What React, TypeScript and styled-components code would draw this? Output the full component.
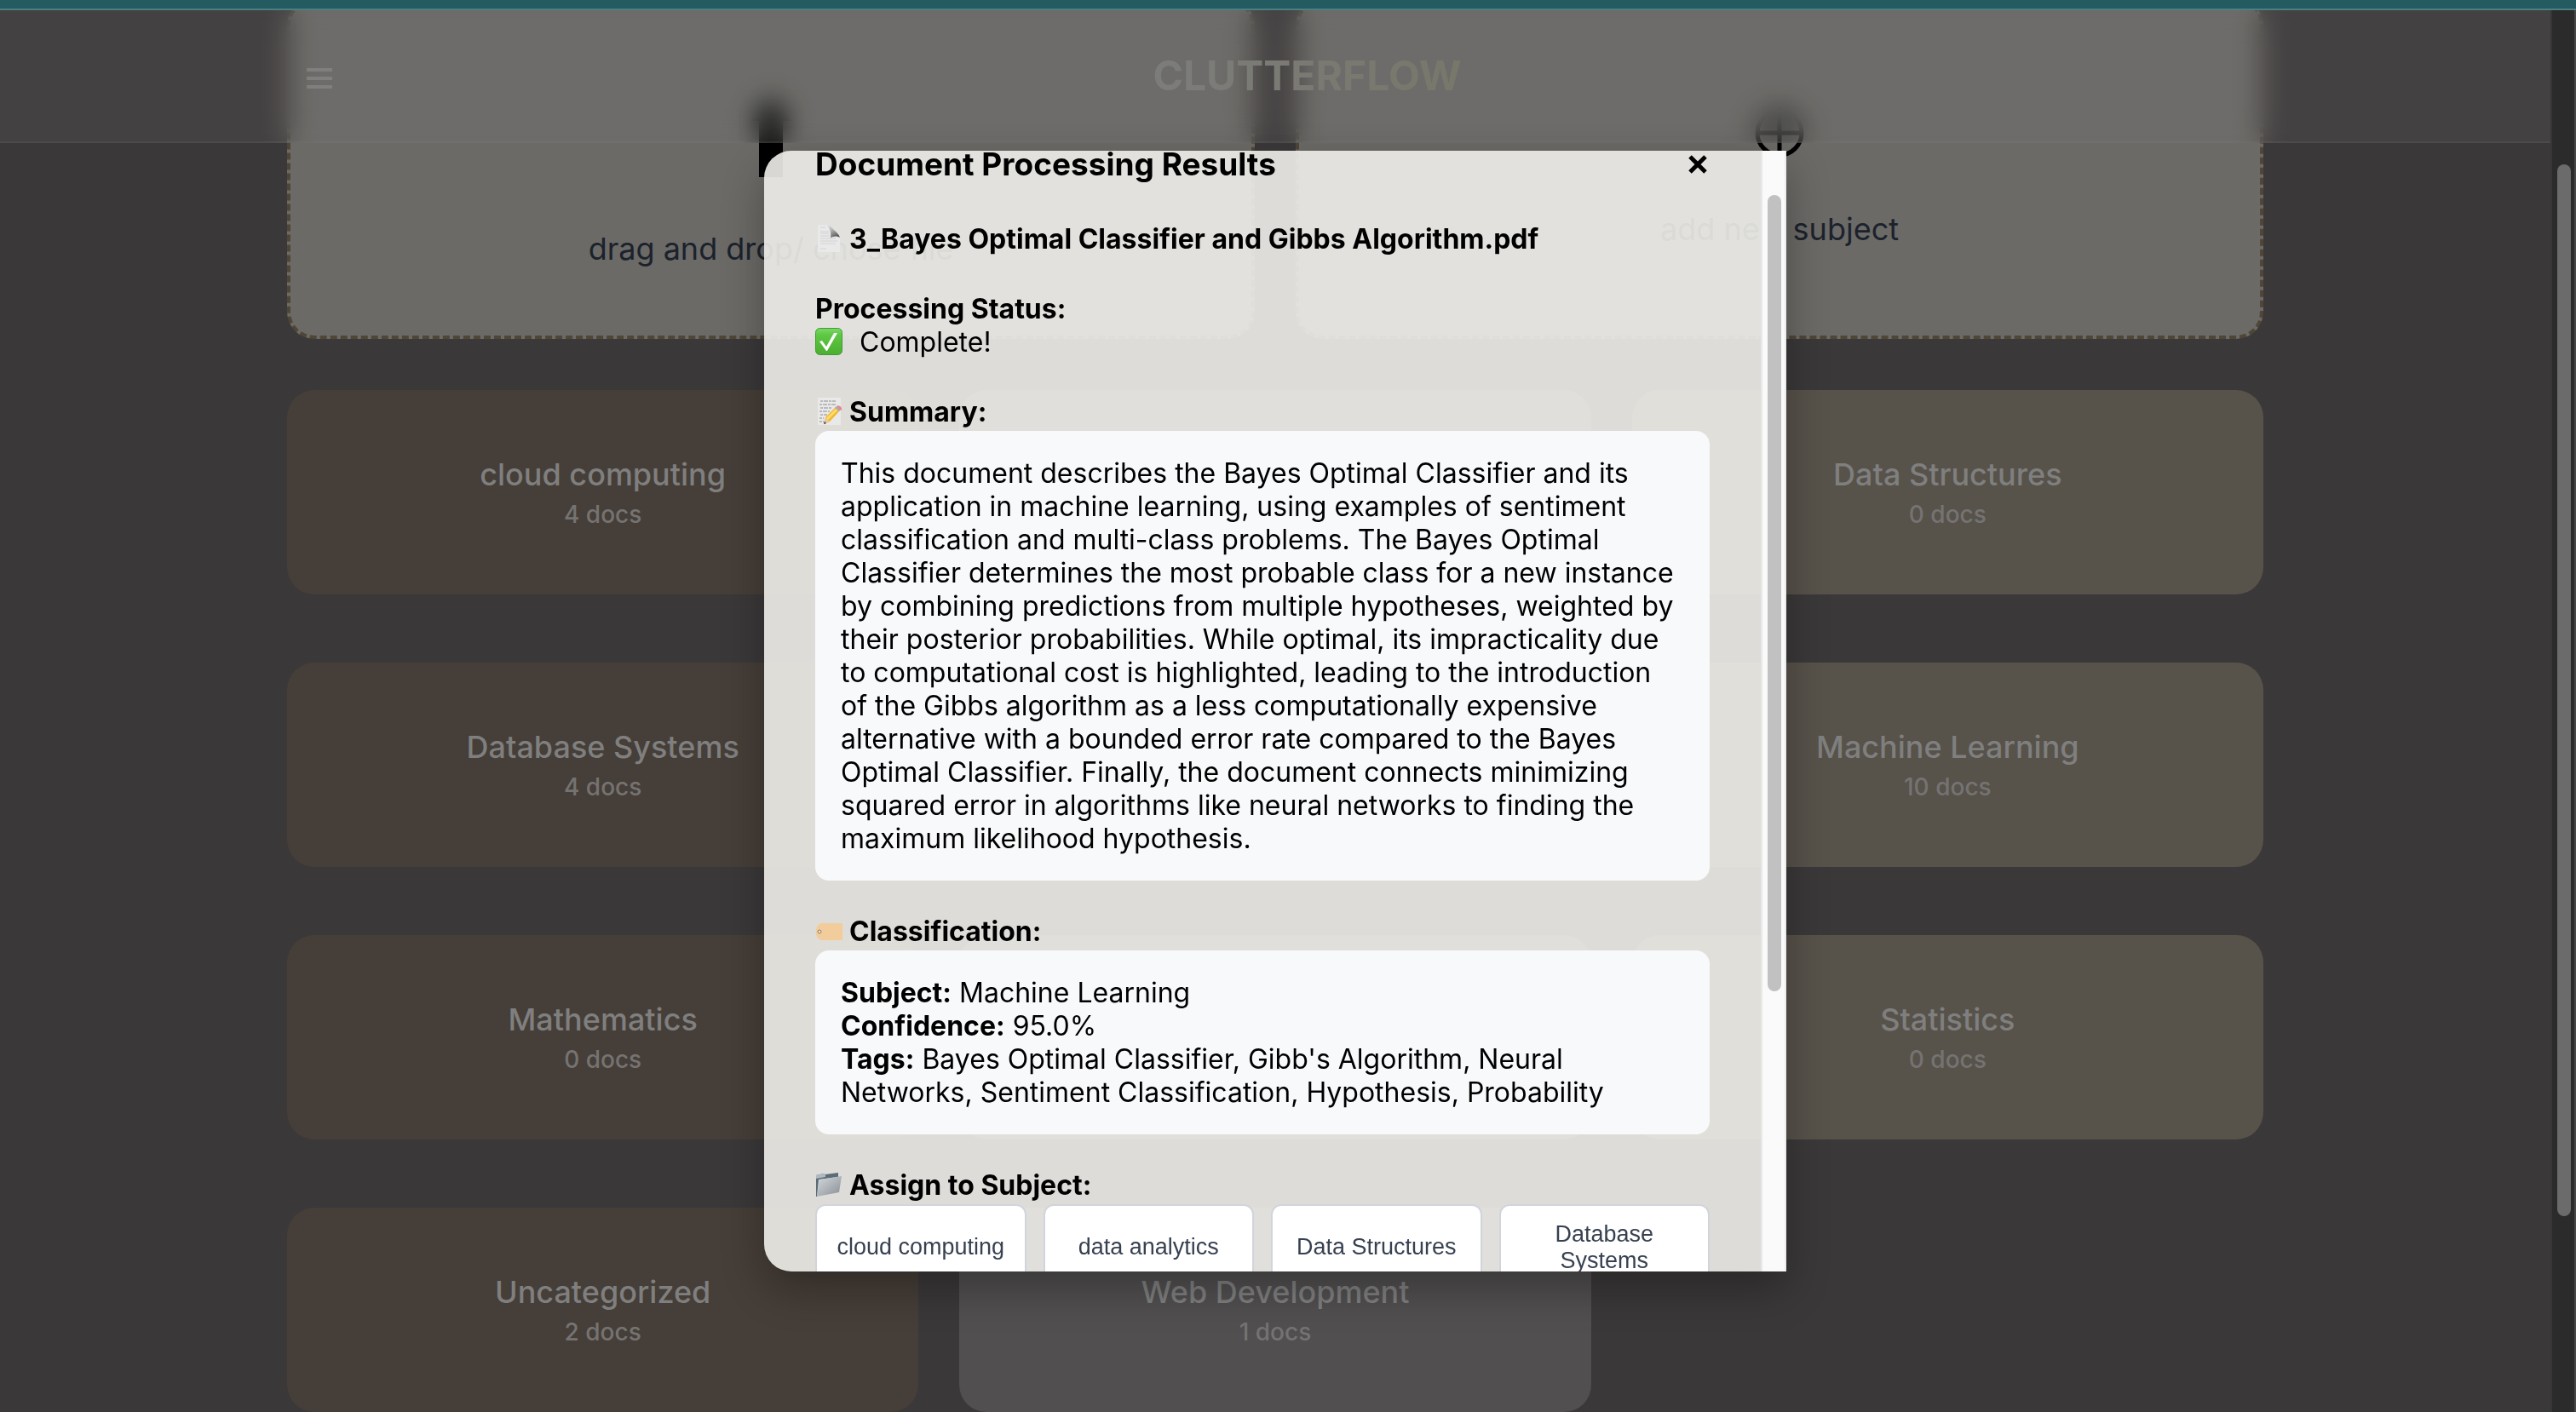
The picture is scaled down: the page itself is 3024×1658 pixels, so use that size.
import React from "react";
import styled, { createGlobalStyle } from "styled-components";

const GlobalStyle = createGlobalStyle`
  *, *::before, *::after { box-sizing: border-box; }
  html, body, #root { height: 100%; }
  body {
    margin: 0;
    background: #3b3839;
    font-family: Inter, "Liberation Sans", sans-serif;
    overflow: hidden;
  }
  button { font: inherit; color: inherit; border: 0; background: none; padding: 0; cursor: pointer; }
  h1, h2, h3, p { margin: 0; }
`;

const Shell = styled.div`
  height: 100vh;
  display: flex;
  flex-direction: column;
`;

const BrowserStrip = styled.div`
  flex: none;
  height: 12px;
  background: #245b60;
  border-bottom: 2px solid #4a7f84;
`;

const Window = styled.div`
  flex: 1;
  min-height: 0;
  display: flex;
`;

const Viewport = styled.div`
  flex: 1;
  min-width: 0;
  position: relative;
  overflow: hidden;
  background: #3b3839;
`;

const Nav = styled.header`
  position: absolute;
  top: 0;
  left: 0;
  right: 0;
  height: 156px;
  background: rgba(127, 127, 127, 0.146);
  border-bottom: 2px solid rgba(127, 127, 127, 0.15);
  backdrop-filter: blur(16px);
`;

const NavInner = styled.div`
  max-width: 2320px;
  height: 100%;
  margin: 0 auto;
  display: flex;
  align-items: center;
`;

const MenuButton = styled.button`
  width: 75px;
  height: 64px;
  display: grid;
  place-items: center;
`;

const Logo = styled.h1`
  flex: 1;
  text-align: center;
  font-size: 48px;
  line-height: 58px;
  font-weight: 700;
  color: transparent;

  span {
    background: linear-gradient(90deg, #7c7d7b, #78776a);
    background-clip: text;
    -webkit-background-clip: text;
  }
`;

const Content = styled.main`
  max-width: 2320px;
  margin: -14px auto 0;
  display: flex;
  flex-direction: column;
  gap: 60px;
`;

const DropRow = styled.div`
  display: grid;
  grid-template-columns: 1fr 1fr;
  gap: 48px;
`;

const DropCard = styled.button`
  height: 400px;
  display: flex;
  flex-direction: column;
  align-items: center;
  justify-content: center;
  background: #6b6a67;
  border: 4px dashed #504636;
  border-radius: 32px;
  color: #1c222c;
  font-size: 36px;
  line-height: 44px;
`;

const DropIcon = styled.span<{ $height: number }>`
  height: ${(p) => p.$height}px;
  padding-bottom: 62px;
  display: flex;
  align-items: flex-end;
  color: #000;
`;

const SubjectGrid = styled.div`
  display: grid;
  grid-template-columns: repeat(3, 1fr);
  gap: 80px 48px;
`;

const tones = { brown: "#463e38", grey: "#514f50", olive: "#57524a" };

const SubjectCard = styled.article<{ $tone: keyof typeof tones }>`
  height: 240px;
  display: flex;
  flex-direction: column;
  align-items: center;
  justify-content: center;
  gap: 8px;
  border-radius: 32px;
  background: ${(p) => tones[p.$tone]};
`;

const SubjectName = styled.h2`
  font-size: 36px;
  line-height: 44px;
  font-weight: 500;
  color: #7f7f7f;
`;

const SubjectCount = styled.p`
  font-size: 28px;
  line-height: 34px;
  font-weight: 500;
  color: #757372;
`;

const ScrollTrack = styled.div<{ $dark?: boolean }>`
  flex: none;
  width: 30px;
  padding: 0 4px 0 6px;
  background: ${(p) => (p.$dark ? "#2b2b2b" : "#fafafa")};
  border-left: 2px solid ${(p) => (p.$dark ? "#373737" : "#e8e8e8")};
  border-right: 2px solid ${(p) => (p.$dark ? "#484848" : "#ededed")};
`;

const ScrollThumb = styled.div<{ $dark?: boolean; $top: number; $size: number }>`
  height: 100%;

  &::before {
    content: "";
    display: block;
    height: ${(p) => p.$top}%;
  }
  &::after {
    content: "";
    display: block;
    height: ${(p) => p.$size}%;
    width: 16px;
    border-radius: 8px;
    background: ${(p) => (p.$dark ? "#6b6b6b" : "#c1c1c1")};
  }
`;

const Overlay = styled.div`
  position: absolute;
  inset: 0;
  display: flex;
  align-items: center;
  justify-content: center;
`;

const Modal = styled.section`
  width: 1200px;
  max-width: 90%;
  height: 80%;
  display: flex;
  overflow: hidden;
  border-radius: 32px 0 0 32px;
  background: rgba(239, 238, 234, 0.9);
  box-shadow: 0 20px 50px rgba(0, 0, 0, 0.3);
  color: #000;
  font-size: 32px;
  line-height: 39px;
`;

const ModalBody = styled.div`
  flex: 1;
  min-width: 0;
  overflow: hidden;
  padding: 0 60px;
`;

const ModalHeader = styled.div`
  display: flex;
  align-items: center;
  justify-content: space-between;
  margin: -4px 0 48px;
`;

const ModalTitle = styled.h2`
  font-size: 37px;
  line-height: 40px;
  font-weight: 700;
`;

const CloseButton = styled.button`
  width: 28px;
  height: 40px;
  display: grid;
  place-items: center;
`;

const Section = styled.div`
  margin-bottom: 40px;
`;

const IconLine = styled.div<{ $gap?: number }>`
  height: 42px;
  display: flex;
  align-items: flex-start;
  gap: ${(p) => p.$gap ?? 8}px;

  svg { flex: none; margin-top: 3px; }
`;

const Strong = styled.h3`
  font-size: 32px;
  line-height: 39px;
  font-weight: 700;
`;

const Panel = styled.div`
  padding: 30px;
  border-radius: 16px;
  background: #f8f9fb;

  b { font-weight: 700; }
`;

const ChoiceGrid = styled.div`
  display: grid;
  grid-template-columns: repeat(4, 1fr);
  gap: 20px;
`;

const Choice = styled.button`
  padding: 18px 20px;
  border: 2px solid #d1d5db;
  border-radius: 12px;
  background: #fff;
  color: #374151;
  font-family: "Liberation Sans", Arial, sans-serif;
  font-size: 27px;
  line-height: 31px;
`;

const MenuIcon = () => (
  <svg width="30" height="32" viewBox="0 0 30 32" fill="#7f7f7f" aria-hidden="true">
    <path d="M0 7h30v4H0zM0 17h30v4H0zM0 27h30v4H0z" />
  </svg>
);

const UploadIcon = () => (
  <svg width="48" height="94" viewBox="0 0 48 94" aria-hidden="true">
    <path d="M24 0L48 28H38V94H10V28H0z" />
  </svg>
);

const PlusCircleIcon = () => (
  <svg width="58" height="58" viewBox="0 0 58 58" fill="none" stroke="#000" strokeWidth="5" aria-hidden="true">
    <circle cx="29" cy="29" r="26" />
    <path d="M29 3v52M3 29h52" />
  </svg>
);

const CloseIcon = () => (
  <svg width="22" height="22" viewBox="0 0 22 22" stroke="#000" strokeWidth="5" aria-hidden="true">
    <path d="M2 2l18 18M20 2L2 20" />
  </svg>
);

const PageIcon = () => (
  <svg width="32" height="32" viewBox="0 0 32 32" aria-hidden="true">
    <defs>
      <linearGradient id="curl" x1="0" y1="0" x2="0.6" y2="1">
        <stop offset="0" stopColor="#e8e8e8" />
        <stop offset="0.5" stopColor="#b0b0b0" />
        <stop offset="1" stopColor="#5c5c5c" />
      </linearGradient>
    </defs>
    <path d="M3 0h13l3 14 10 1v17H3z" fill="#e9e9e9" />
    <path d="M6 3h6M6 8h10M6 10h10M6 13h11M6 16h18M6 19h20M6 22h18M6 28h7" stroke="#d2d2d2" strokeWidth="1" />
    <path d="M13 0c4 3 6 9 5 15 4-2 8-2 11 0C28 11 25 9 22 6 19 3 17 0 13 0z" fill="url(#curl)" />
  </svg>
);

const CheckIcon = () => (
  <svg width="32" height="32" viewBox="0 0 32 32" aria-hidden="true">
    <defs>
      <linearGradient id="green" x1="0" y1="0" x2="0" y2="1">
        <stop offset="0" stopColor="#7fd86a" />
        <stop offset="0.25" stopColor="#5dc843" />
        <stop offset="1" stopColor="#4bae30" />
      </linearGradient>
    </defs>
    <rect x="0.5" y="0.5" width="31" height="31" rx="5" fill="url(#green)" stroke="#3f9b35" />
    <path d="M5 16l3-1 5 7L22 6h4L14 27h-1z" fill="#fff" />
  </svg>
);

const MemoIcon = () => (
  <svg width="32" height="32" viewBox="0 0 32 32" aria-hidden="true">
    <path d="M3 0h27v32H3z" fill="#e9e9e9" />
    <path d="M6 4h18M5 8h20M6 12h14M5 16h12M6 20h8M5 24h5M5 28h6" stroke="#8c8c8c" strokeWidth="1" strokeDasharray="3 1 5 1" />
    <path d="M10 31l2-8L24 11l5 4-12 13z" fill="#f2b92f" />
    <path d="M13 24L25 12l2 2-12 12z" fill="#ffdc6b" />
    <path d="M10 31l2-8 5 5z" fill="#e8c9a0" />
    <path d="M10 31l1-3 2 2z" fill="#333" />
    <path d="M23 12l2-2 5 4-2 2z" fill="#9fb0b5" />
    <path d="M25 10c2-2 7 1 6 4l-1 1z" fill="#ea8490" />
  </svg>
);

const TagIcon = () => (
  <svg width="32" height="32" viewBox="0 0 32 32" aria-hidden="true">
    <path d="M7 7h25v20H7c-3-1-6-4-6-8V15c0-4 3-7 6-8z" fill="#f2cd9b" />
    <circle cx="5" cy="17" r="2" fill="#f4e6d2" stroke="#8d7a68" />
  </svg>
);

const FolderIcon = () => (
  <svg width="32" height="32" viewBox="0 0 32 32" aria-hidden="true">
    <defs>
      <linearGradient id="steel" x1="0" y1="0" x2="1" y2="1">
        <stop offset="0" stopColor="#d5d9dc" />
        <stop offset="1" stopColor="#878e95" />
      </linearGradient>
    </defs>
    <path d="M1 5l9-2 2 1 15-2v5L4 10 2 30H1z" fill="#5b6c78" />
    <path d="M1 5l9-2 2 1v3L1 9z" fill="#aebac2" />
    <path d="M5 10l26-4-3 19L2 30z" fill="url(#steel)" />
  </svg>
);

type Subject = { name?: string; docs?: number };

const subjects: Subject[] = [
  { name: "cloud computing", docs: 4 },
  {},
  { name: "Data Structures", docs: 0 },
  { name: "Database Systems", docs: 4 },
  {},
  { name: "Machine Learning", docs: 10 },
  { name: "Mathematics", docs: 0 },
  {},
  { name: "Statistics", docs: 0 },
  { name: "Uncategorized", docs: 2 },
  { name: "Web Development", docs: 1 },
];

const columnTones: (keyof typeof tones)[] = ["brown", "grey", "olive"];

const choices = ["cloud computing", "data analytics", "Data Structures", "Database Systems"];

export default function App() {
  return (
    <>
      <GlobalStyle />
      <Shell>
        <BrowserStrip />
        <Window>
          <Viewport>
            <Content>
              <DropRow>
                <DropCard type="button">
                  <DropIcon $height={188}><UploadIcon /></DropIcon>
                  drag and drop/ chose file
                </DropCard>
                <DropCard type="button">
                  <DropIcon $height={142}><PlusCircleIcon /></DropIcon>
                  add new subject
                </DropCard>
              </DropRow>
              <SubjectGrid>
                {subjects.map((s, i) => (
                  <SubjectCard key={i} $tone={columnTones[i % 3]}>
                    {s.name && <SubjectName>{s.name}</SubjectName>}
                    {s.name && <SubjectCount>{s.docs} docs</SubjectCount>}
                  </SubjectCard>
                ))}
              </SubjectGrid>
            </Content>
            <Nav>
              <NavInner>
                <MenuButton type="button" aria-label="Menu"><MenuIcon /></MenuButton>
                <Logo><span>CLUTTERFLOW</span></Logo>
              </NavInner>
            </Nav>
            <Overlay>
              <Modal role="dialog" aria-labelledby="results-title">
                <ModalBody>
                  <ModalHeader>
                    <ModalTitle id="results-title">Document Processing Results</ModalTitle>
                    <CloseButton type="button" aria-label="Close"><CloseIcon /></CloseButton>
                  </ModalHeader>
                  <Section>
                    <IconLine><PageIcon /><Strong>3_Bayes Optimal Classifier and Gibbs Algorithm.pdf</Strong></IconLine>
                  </Section>
                  <Section>
                    <Strong>Processing Status:</Strong>
                    <IconLine $gap={20}><CheckIcon /><span>Complete!</span></IconLine>
                  </Section>
                  <Section>
                    <IconLine><MemoIcon /><Strong>Summary:</Strong></IconLine>
                    <Panel>
                      This document describes the Bayes Optimal Classifier and its application in machine
                      learning, using examples of sentiment classification and multi-class problems. The
                      Bayes Optimal Classifier determines the most probable class for a new instance by
                      combining predictions from multiple hypotheses, weighted by their posterior
                      probabilities. While optimal, its impracticality due to computational cost is
                      highlighted, leading to the introduction of the Gibbs algorithm as a less
                      computationally expensive alternative with a bounded error rate compared to the
                      Bayes Optimal Classifier. Finally, the document connects minimizing squared error in
                      algorithms like neural networks to finding the maximum likelihood hypothesis.
                    </Panel>
                  </Section>
                  <Section>
                    <IconLine><TagIcon /><Strong>Classification:</Strong></IconLine>
                    <Panel>
                      <p><b>Subject:</b> Machine Learning</p>
                      <p><b>Confidence:</b> 95.0%</p>
                      <p>
                        <b>Tags:</b> Bayes Optimal Classifier, Gibb's Algorithm, Neural Networks, Sentiment
                        Classification, Hypothesis, Probability
                      </p>
                    </Panel>
                  </Section>
                  <Section>
                    <IconLine><FolderIcon /><Strong>Assign to Subject:</Strong></IconLine>
                    <ChoiceGrid>
                      {choices.map((c) => (
                        <Choice key={c} type="button">{c}</Choice>
                      ))}
                    </ChoiceGrid>
                  </Section>
                </ModalBody>
                <ScrollTrack>
                  <ScrollThumb $top={4} $size={71} />
                </ScrollTrack>
              </Modal>
            </Overlay>
          </Viewport>
          <ScrollTrack $dark>
            <ScrollThumb $dark $top={11} $size={75} />
          </ScrollTrack>
        </Window>
      </Shell>
    </>
  );
}
